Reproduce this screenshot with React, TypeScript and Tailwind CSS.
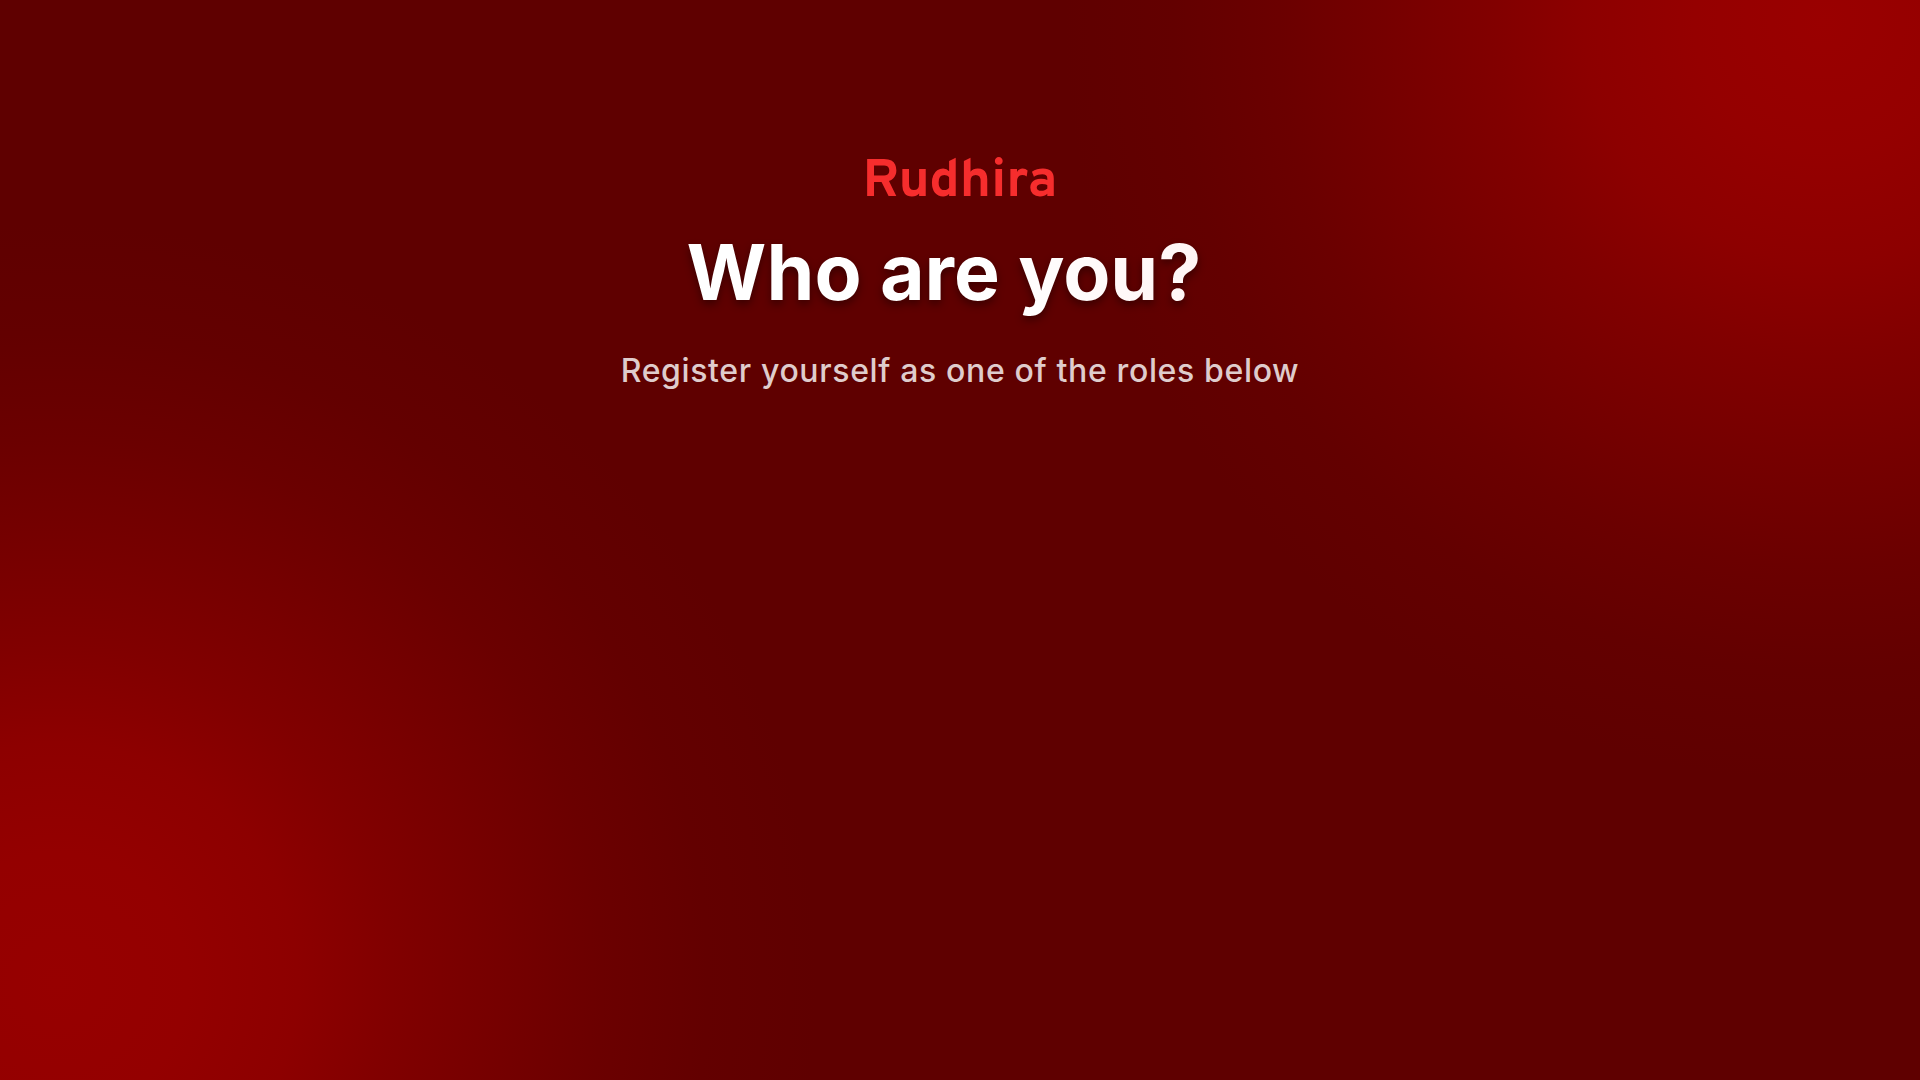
export default function App() {
  return (
    <main className="flex min-h-screen flex-col items-center overflow-hidden bg-[#5f0000] bg-[radial-gradient(circle_at_95%_2%,#9a0000_0px,#950000_130px,#8d0000_240px,#810000_335px,#760000_440px,#6b0000_545px,#630000_650px,#5f0000_760px,transparent_760px),radial-gradient(circle_at_3%_91%,#970000_0px,#940000_130px,#8d0000_240px,#810000_335px,#760000_440px,#6b0000_545px,#630000_650px,#5f0000_760px,transparent_760px)] pt-[149px] font-['Inter',sans-serif]">
      <p className="font-['Overpass','Open_Sans',sans-serif] text-[53px] leading-[68px] font-bold text-[#f62d2d]">Rudhira</p>
      <h1 className="mr-8 bg-linear-to-r from-white from-60% to-[#fff5f5] bg-clip-text text-[77px] leading-[110px] font-bold text-transparent drop-shadow-[0_4px_4px_rgba(0,0,0,0.4)]">Who are you?</h1>
      <p className="mt-4 text-[32px] leading-[56px] font-medium tracking-[0.02em] text-[#dfcccc]">Register yourself as one of the roles below</p>
    </main>
  );
}
